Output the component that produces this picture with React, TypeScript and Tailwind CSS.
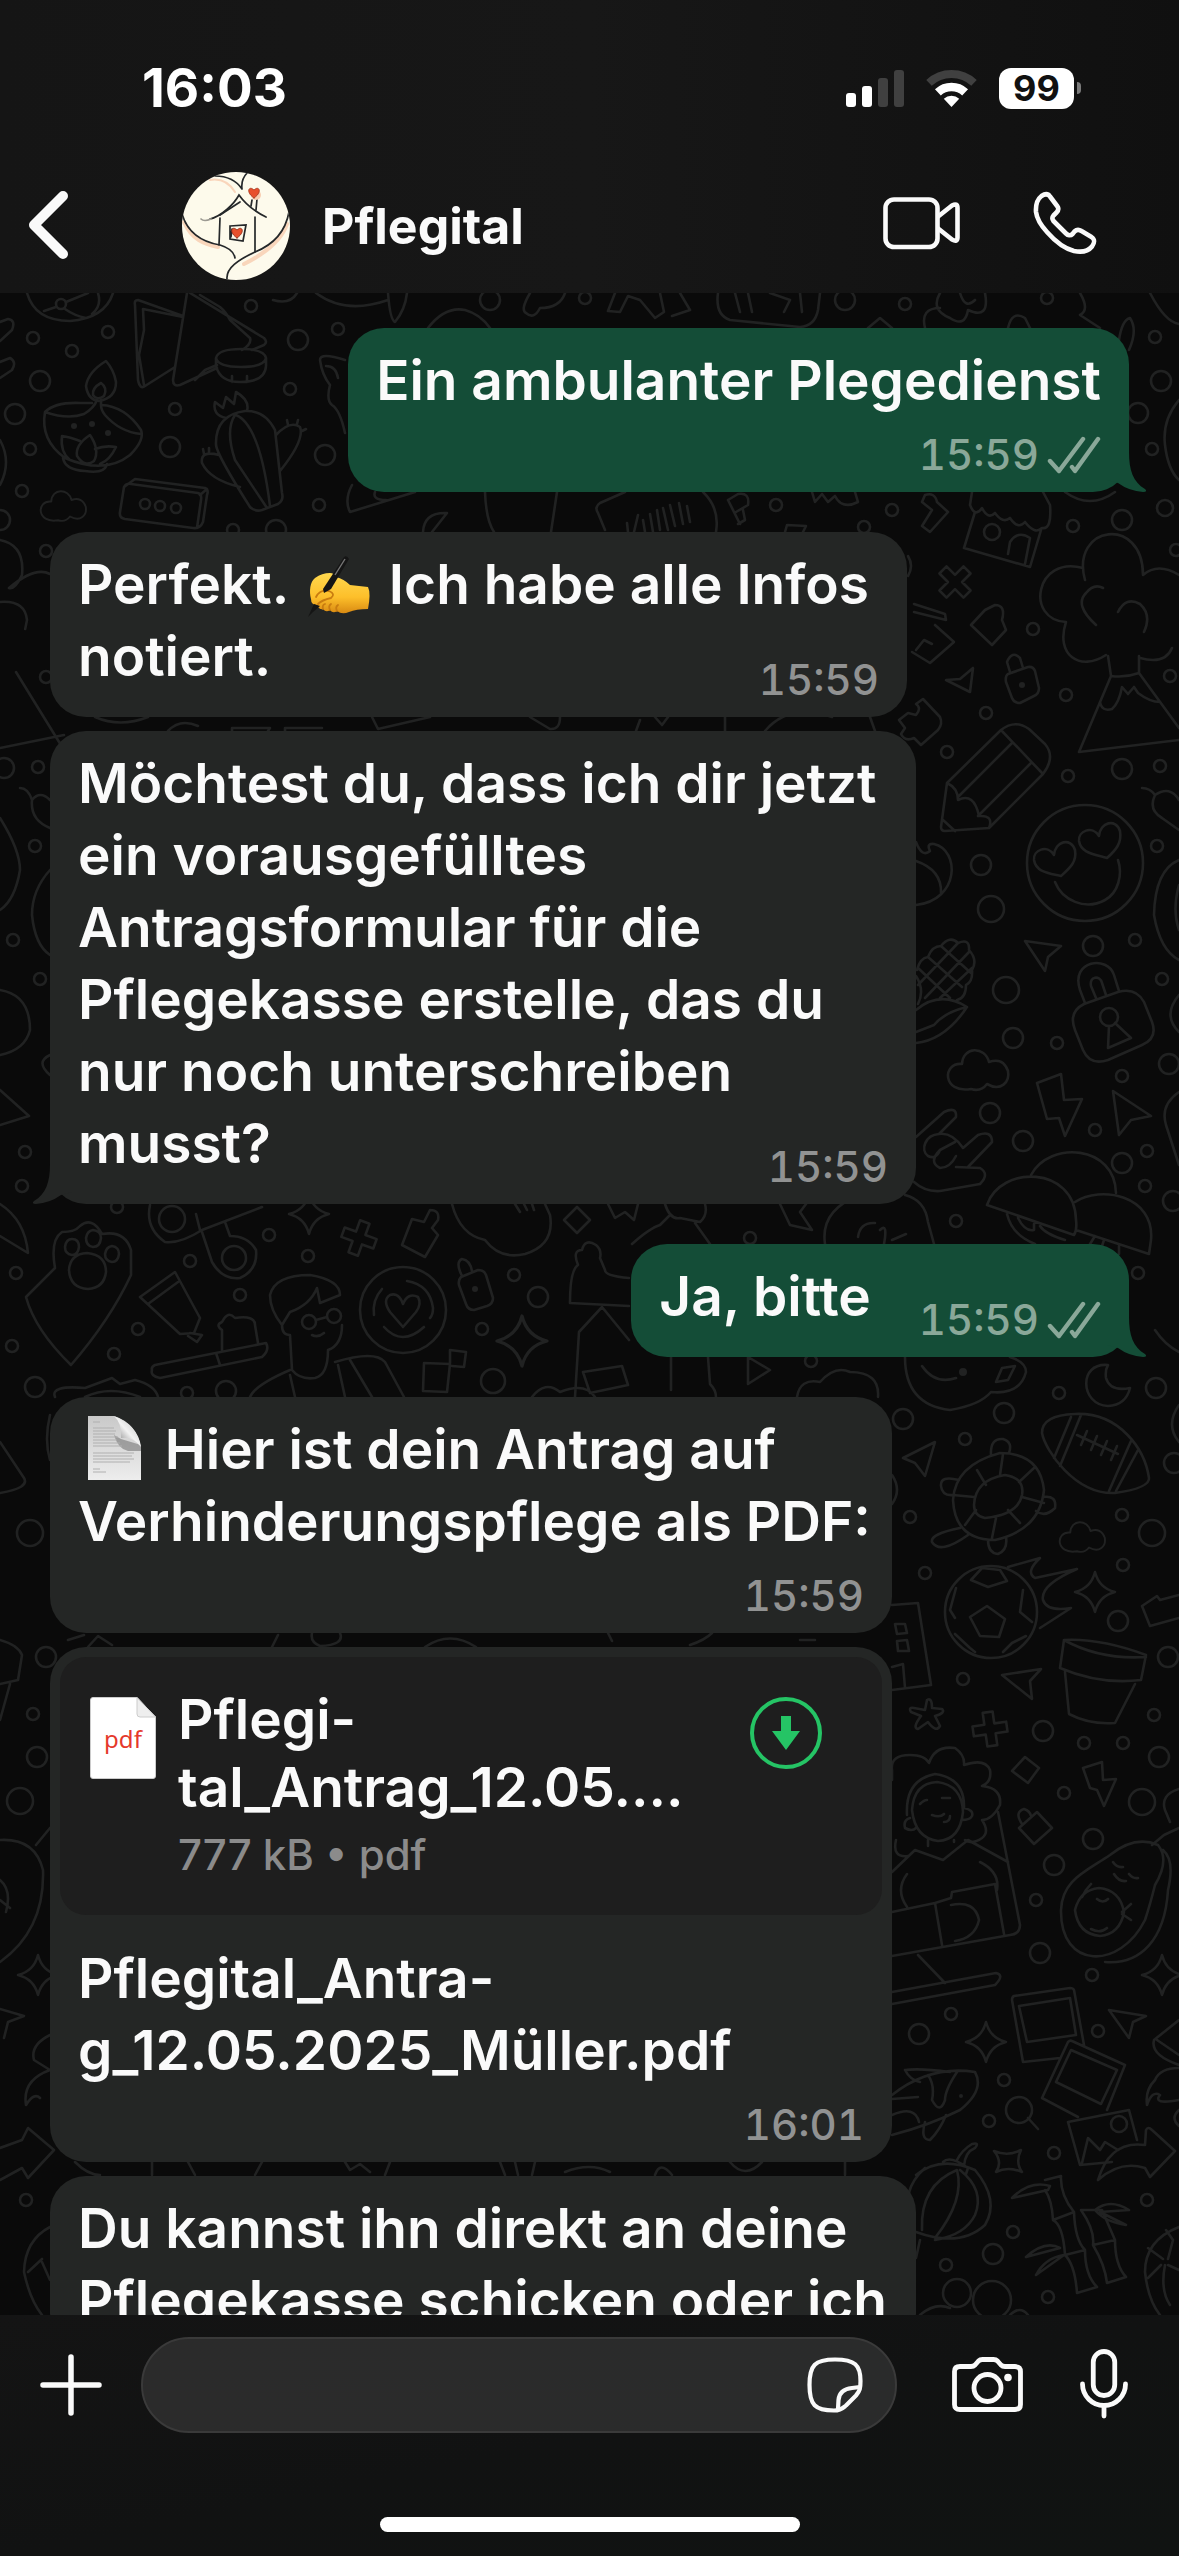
import type { ReactNode } from "react";

type Dot = [number, number, number];

const DOTS: Dot[] = [
  [251, 306, 6], [298, 340, 10], [338, 329, 6], [33, 338, 6], [108, 332, 6], [72, 351, 6], [40, 381, 10], [15, 414, 10],
  [290, 389, 6], [175, 409, 6], [170, 447, 10], [325, 455, 10], [30, 449, 6], [22, 491, 6], [0, 520, 10], [319, 505, 6],
  [233, 530, 6], [276, 530, 10], [145, 504, 5], [160, 506, 5], [176, 508, 5], [61, 304, 5],
  [490, 300, 10], [585, 298, 6], [845, 300, 10], [905, 304, 6], [1047, 298, 6], [1155, 337, 6], [1161, 381, 10], [1138, 413, 10],
  [1152, 449, 6], [776, 505, 6], [892, 510, 6], [1073, 526, 6], [1122, 520, 10], [1165, 508, 8], [864, 527, 6], [992, 532, 8],
  [1033, 629, 6], [1176, 550, 6],
  [1066, 695, 6], [986, 713, 6], [947, 752, 6], [1068, 776, 6], [1122, 769, 10], [1160, 766, 6], [981, 865, 10], [991, 909, 13],
  [1093, 946, 10], [1135, 940, 6], [1006, 990, 13], [1162, 979, 6], [1013, 1038, 10], [1057, 1043, 6], [1122, 1076, 6],
  [1169, 1064, 10], [990, 1113, 10], [1023, 1141, 10], [1095, 1130, 6], [1147, 1151, 6], [1122, 1163, 10], [1145, 1186, 6],
  [1173, 1201, 10], [1157, 846, 6], [1170, 676, 6], [956, 1221, 6], [1109, 1017, 9], [1138, 1273, 6],
  [269, 1235, 6], [190, 1261, 6], [16, 1273, 6], [308, 1256, 6], [240, 1295, 6], [514, 1275, 6], [538, 1297, 10], [138, 1329, 6],
  [482, 1329, 6], [12, 1346, 6], [114, 1354, 6], [493, 1381, 12], [35, 1387, 10], [187, 1393, 6], [226, 1391, 10], [750, 1238, 6],
  [811, 1361, 6], [117, 1207, 6], [403, 1310, 43], [172, 1219, 13], [234, 1258, 12], [309, 1322, 7], [334, 1316, 7],
  [903, 1419, 10], [1004, 1413, 10], [965, 1439, 6], [1059, 1393, 6], [1156, 1388, 10], [910, 1517, 6], [1122, 1515, 6],
  [1152, 1533, 13], [925, 1573, 6], [1123, 1565, 6], [1118, 1621, 10], [963, 1679, 6], [1168, 1657, 10], [1154, 1715, 6],
  [1043, 1731, 10], [1084, 1743, 6], [1123, 1743, 6], [1159, 1757, 10], [1064, 1793, 6], [1142, 1802, 13], [1093, 1839, 10],
  [1054, 1865, 10], [1036, 1900, 6], [1040, 1953, 10], [1092, 1975, 6], [919, 2034, 10], [951, 2014, 6], [1098, 2031, 6],
  [1004, 2080, 6], [989, 2121, 6], [1054, 2153, 6], [1147, 2200, 6], [1013, 2232, 6], [993, 2254, 10], [946, 2265, 6],
  [1048, 2297, 6], [1174, 1463, 10], [991, 1612, 46], [1019, 2110, 13], [1119, 2124, 8], [957, 2293, 14], [992, 2300, 19],
  [1085, 863, 58], [46, 551, 6], [46, 677, 6], [4, 768, 10], [38, 767, 6], [35, 846, 6], [13, 940, 6], [40, 979, 6], [25, 1152, 6],
  [22, 1186, 6], [46, 1657, 10], [33, 1714, 6], [37, 1757, 10], [20, 1801, 13], [26, 2200, 6], [30, 1533, 13],
];

const FILLED: Dot[] = [
  [74, 426, 3], [92, 424, 3], [108, 433, 3], [1022, 685, 3], [963, 1372, 4], [961, 2096, 2], [475, 1289, 3],
];

const CLOUD = "M15 18C-5 16 -5 48 24 43Q34 46 40 38C54 46 63 36 61 25Q56 11 42 16C38 0 16 0 15 18Z";
const STAR = "M0 -20Q4 -4 20 0Q4 4 0 20Q-4 4 -20 0Q-4 -4 0 -20Z";
const CROSS = "M-5 -17H5V-5H17V5H5V17H-5V5H-17V-5H-5Z";
const DIAMOND = "M0 -13L13 0L0 13L-13 0Z";

const DOODLES: string[] = [
  // top left: ball, curtains, bowl, oil lamp
  "M27 293Q35 321 70 321Q105 318 113 293M56 307L44 311M66 302L88 293M65 309Q75 316 86 318M98 293Q102 306 92 314",
  "M183 316L138 300Q134 300 135 305L138 380Q140 390 145 386L175 367M183 317L143 309L144 330L139 355L144 385M187 293L173 380Q173 387 180 385L217 368M195 380L205 370L217 365M190 293L264 338Q268 342 264 345L252 350M200 295L220 307Q226 312 230 320L250 338Q252 344 242 350",
  "M216 358Q218 349 241 349Q264 349 266 358Q264 367 241 367Q218 367 216 358V366Q220 382 240 382Q265 382 266 366V358M232 376V382M247 376V382",
  "M106 361Q88 372 86 386Q88 400 99 401Q116 398 116 382Q114 370 106 361ZM101 383Q92 388 93 395Q97 401 104 396Q108 388 101 383Z",
  "M45 412Q55 402 80 403L92 403M45 412Q68 420 84 414Q94 408 97 400M45 412Q40 440 65 458Q105 475 130 455Q145 440 141 430Q125 406 101 405V400M141 434Q120 432 105 415Q101 410 101 405M63 458Q65 470 85 471Q105 474 107 464M77 456Q75 445 90 435Q100 450 94 461Q85 468 77 456M80 441Q70 437 62 436Q60 452 70 460M95 449Q105 445 116 447Q110 460 100 464",
  "M250 507Q255 512 262 510L278 504Q284 500 282 493L275 430Q265 410 245 411Q215 415 216 445Q217 455 250 507ZM235 415Q225 430 235 460L267 508M236 415Q260 425 270 506M219 455Q200 450 202 463Q210 480 240 487M276 435Q290 420 300 427Q305 440 280 471M226 418Q212 415 215 402L223 408L226 397L234 404L236 392Q250 400 247 411M204 454L203 449M209 452V448M288 425L287 420M297 424L298 420M302 431L306 429",
  "M124 487L135 479L205 488Q209 490 207 495L203 522Q200 529 193 528L125 519Q119 518 120 512L124 487Q126 483 131 484L198 493Q202 494 201 500L197 528M200 495L207 489",
  "M0 322L8 319Q16 320 12 330L0 341M0 362L10 358Q17 362 12 370L0 378M0 440Q12 462 0 485M345 360Q320 352 320 360Q322 375 330 385Q326 400 332 405Q340 410 345 433M326 366Q336 366 338 378",
  "M428 328Q445 306 465 310Q480 314 490 328M273 300Q290 305 297 293M316 293Q345 315 388 300M388 293Q390 320 395 322Q405 310 407 293",
  "M530 293Q520 310 526 313Q534 320 540 308Q560 308 565 293M615 293L608 311L620 312L628 296L640 300L655 318L664 312L660 293M690 310L680 293M672 316L690 310M718 293Q715 315 730 320L800 327Q815 326 818 310L820 293M735 293L740 312M748 293L752 312M770 293L790 300L784 312M800 293L802 312M868 328L880 318L892 328M940 293Q930 310 950 318Q965 328 968 310Q990 320 985 293M960 293Q965 310 975 300M925 328Q920 308 940 308M1080 293Q1090 310 1080 315L1100 328M1008 328Q1012 310 1025 318L1030 328M1119 340Q1122 320 1130 318Q1138 330 1129 350M1150 293Q1165 322 1179 324M1179 400Q1162 420 1165 445Q1168 470 1179 480",
  // below the first message
  "M352 485Q344 500 350 512L415 492M375 492Q372 500 386 500M485 492Q486 520 494 532M423 532Q424 512 447 513L432 532M557 492L551 532M605 530L598 513Q594 507 600 503L625 492M628 532L627 523M634 532L638 515M645 532L643 520M653 532L650 514M660 530L657 510M668 530L663 508M675 526L670 505M683 524L679 503M690 522L687 506M703 492Q720 508 716 532M728 500L738 494Q750 492 748 505L736 512M728 500L740 524M738 524L745 520L743 510M812 492L815 502L822 494L828 502L835 496Q842 510 858 502L855 492M785 532L787 525L806 526L803 532",
  "M970 505Q975 518 982 508Q988 520 995 513Q1003 524 1010 518Q1018 530 1025 522Q1035 535 1042 528Q1052 530 1050 505L1043 492M972 492L970 505M975 512L964 548L1030 567L1041 530M1008 554L1010 542Q1018 530 1030 538L1025 564M925 495Q935 492 937 502L948 512L930 532L922 526L932 510L922 502ZM1065 492Q1090 510 1115 492",
  "M1085 580C1070 525 1143 515 1143 575Q1158 562 1179 575M1083 568C1035 555 1025 620 1066 622C1055 655 1080 672 1106 655M1096 625Q1074 605 1086 593Q1094 583 1103 588M1118 612Q1126 596 1140 604Q1152 615 1144 632M1140 658Q1165 665 1172 648",
  "M914 604L945 614L946 620L914 612M935 625L954 642L930 663L912 652M916 650L924 640L932 644M971 625L985 610L995 605Q1006 605 1002 620L1006 630L992 645ZM908 556Q914 566 908 576M946 680L960 679L973 668L970 692Z",
  // right column, upper half
  "M1008 674L1028 667Q1033 666 1035 671L1039 688Q1039 694 1034 696L1020 703Q1014 703 1012 698L1006 682Q1005 676 1008 674ZM1010 672L1007 662Q1012 650 1020 658L1023 668",
  "M1108 656L1111 676Q1125 678 1139 673V656M1111 676L1079 752L1179 740M1139 673L1179 728M1100 702Q1102 712 1112 709Q1119 703 1122 687L1128 694L1134 687L1138 693Q1150 702 1160 702",
  "M899 720L908 713L916 715Q922 708 916 704L923 699L940 717Q943 724 938 730L921 745L914 738Q905 742 901 734L905 728Z",
  "M947 783L1001 730Q1015 719 1029 729L1045 744Q1056 757 1043 774L989 828L945 831Q941 831 941 827ZM1001 730L1043 774M1012 743L958 797M1031 763L978 816M947 783Q958 788 958 800Q974 792 979 816Q994 815 989 828M943 820L955 831",
  "M1099 836C1092 825 1078 831 1079 841C1081 853 1093 854 1107 858C1116 850 1122 843 1120 831C1116 818 1100 822 1099 836ZM1054 855C1047 844 1033 850 1034 860C1036 872 1048 873 1061 876C1070 868 1077 862 1075 850C1071 837 1055 841 1054 855ZM1055 882C1062 900 1085 911 1105 900C1118 893 1123 875 1118 860",
  "M1142 788Q1150 788 1155 795Q1170 785 1179 800M1155 795Q1148 810 1162 818L1179 830M1179 860Q1155 870 1154 915Q1160 950 1179 960M1179 885Q1172 910 1179 930M1179 995Q1162 1015 1179 1032M1179 1092Q1160 1105 1166 1125L1179 1165",
  "M916 842Q922 858 930 851Q926 843 934 844C960 850 960 900 916 905M916 861Q942 870 941 893",
  "M917 970Q920 958 928 957Q932 946 941 946Q950 935 958 943Q970 938 969 950Q978 960 972 970Q973 982 966 985Q966 998 957 1000M928 957L962 987M941 946L971 973M918 968L950 998M918 985L958 943M925 998L969 952M916 976Q925 990 918 1004M940 998L972 968M916 1010Q940 990 967 1007Q945 1040 916 1043M916 1032L934 1025Q945 1012 967 1007",
  "M1025 941L1061 946L1048 957L1045 971ZM1113 1091L1151 1116L1131 1120L1119 1135ZM1037 1083L1061 1074L1064 1100L1082 1099L1065 1136L1059 1118L1047 1119Z",
  "M1084 1004L1118 992Q1136 987 1144 1002L1152 1022Q1158 1038 1142 1045L1108 1060Q1090 1066 1083 1050L1075 1030Q1068 1012 1084 1004ZM1085 1003L1080 990C1070 960 1108 955 1114 975L1119 991M1096 998L1091 986C1089 976 1100 975 1102 983L1106 995M1109 1026L1108 1048L1131 1038L1115 1023",
  "M916 1137L944 1112Q957 1106 956 1117L939 1134C925 1135 920 1150 928 1156Q936 1160 940 1150L955 1142M940 1150Q928 1162 940 1168Q950 1168 956 1156M939 1134Q952 1132 963 1148L978 1135Q992 1130 992 1142L968 1167M956 1167L980 1168Q990 1174 980 1184L940 1191Q925 1192 914 1182",
  "M987 1205C1000 1165 1075 1165 1076 1220C1077 1228 1076 1232 1074 1235ZM1031 1175C1050 1140 1115 1145 1116 1193M1075 1202C1100 1185 1155 1195 1151 1240L1149 1254L1076 1230M1007 1214Q1012 1235 1035 1244M1018 1218Q1025 1232 1034 1230V1224M1040 1226Q1045 1234 1065 1240M1095 1236L1090 1244M1104 1240L1102 1246M1119 1246V1254M905 1195Q925 1200 928 1222L934 1244M880 1230Q888 1222 884 1244M892 1240L906 1234",
  // middle band
  "M71 1365Q35 1330 26 1297L55 1268Q50 1240 62 1232Q75 1232 80 1226Q92 1216 102 1234Q125 1230 131 1250V1275Q110 1320 71 1365ZM87 1253Q106 1255 106 1272Q104 1288 88 1289Q70 1288 69 1270Q70 1254 87 1253ZM72 1239Q79 1239 79 1247Q78 1255 72 1255Q65 1254 65 1247Q66 1239 72 1239M93 1230Q101 1231 101 1238Q100 1247 93 1247Q86 1246 86 1238Q87 1231 93 1230M112 1246Q119 1247 119 1254Q118 1262 112 1262Q105 1261 105 1254Q106 1247 112 1246",
  "M150 1205Q145 1228 165 1242Q180 1244 202 1230L262 1207M202 1232L212 1262Q222 1280 240 1278Q258 1270 256 1250Q248 1236 230 1236L225 1222M196 1214L200 1230M0 1204Q25 1220 28 1253L0 1236",
  "M402 1245L412 1219L424 1222L430 1210Q440 1210 438 1220L432 1228L438 1235L425 1257ZM452 1204Q460 1235 485 1240Q500 1260 525 1254Q555 1245 550 1215L545 1204M515 1204L520 1212M524 1204L527 1210M532 1204L534 1210",
  "M382 1289Q372 1300 374 1315M407 1281Q430 1285 433 1308Q433 1315 430 1318M384 1327Q402 1347 424 1327M403 1327L390 1312Q382 1300 390 1295Q399 1292 403 1304Q408 1292 418 1297Q422 1304 416 1312Z",
  "M282 1325Q270 1310 270 1295Q275 1275 310 1275Q340 1280 340 1295L320 1303L317 1288Q310 1305 290 1312L282 1325Q282 1335 290 1335L292 1370Q300 1380 315 1378Q328 1375 328 1350Q342 1345 342 1325M335 1362Q375 1350 385 1362L404 1397M250 1397Q255 1385 290 1370M290 1375L295 1397M338 1365L345 1397M350 1360L372 1397M316 1320L327 1317M312 1335Q318 1338 324 1333",
  "M152 1370Q150 1376 160 1378L262 1357Q270 1350 266 1343L155 1365Q151 1367 152 1370ZM222 1350V1330Q215 1325 222 1322Q228 1310 235 1318Q255 1315 255 1325L258 1343M216 1353L220 1365M140 1297L175 1272L200 1318L194 1333L180 1334ZM148 1304L178 1282M190 1333L202 1335L197 1342L188 1336",
  "M461 1277L478 1270Q484 1270 486 1275L493 1298Q493 1304 487 1306L474 1310Q468 1310 466 1304L459 1285Q458 1280 461 1277ZM462 1276Q455 1262 462 1259Q470 1260 472 1271",
  "M424 1363L450 1364L447 1392L423 1391ZM450 1363V1350L466 1352L464 1367L452 1366M570 1303Q570 1270 578 1265Q572 1250 582 1250Q585 1238 596 1245Q602 1250 600 1258L605 1270Q605 1276 629 1278M570 1303L629 1306M602 1307L579 1332L575 1397M602 1307L629 1340M583 1372L622 1366L628 1385L590 1393ZM671 1357V1390M708 1357L710 1384Q716 1390 716 1397M748 1357L770 1370L748 1384ZM797 1397Q800 1378 820 1382Q835 1365 850 1372Q880 1372 878 1397M532 1397Q545 1380 560 1392Q585 1382 595 1397",
  "M665 1204Q670 1220 680 1218L700 1222Q708 1215 705 1204M632 1244Q650 1228 660 1225L670 1215M695 1223L710 1244M608 1204L615 1218L625 1212L634 1220L638 1204M780 1204L790 1225L812 1230L800 1212L806 1204M825 1244Q820 1210 860 1195M858 1237Q860 1222 875 1223M55 1397Q50 1385 85 1388L112 1378L120 1384L135 1380Q155 1385 158 1397M85 1397Q110 1385 140 1397",
  // right column, lower half
  "M905 1357Q905 1405 950 1410Q980 1405 991 1392Q1020 1395 1026 1372Q1026 1362 1010 1357M922 1366Q935 1385 956 1378M996 1382L1002 1368L1015 1366L1008 1380Z",
  "M1108 1365C1078 1362 1080 1405 1108 1406Q1126 1405 1130 1388Q1110 1392 1106 1378Q1105 1370 1108 1365ZM1155 1330Q1165 1345 1179 1352M1179 1405Q1165 1425 1179 1442",
  "M1042 1433Q1042 1415 1075 1414C1120 1412 1145 1450 1149 1478Q1150 1488 1115 1493C1075 1495 1045 1450 1042 1433ZM1071 1417L1054 1458M1081 1415L1060 1466M1131 1441L1109 1491M1138 1450L1116 1491M1077 1435L1118 1454M1087 1431L1081 1445M1097 1436L1091 1450M1107 1441L1101 1455M1117 1446L1111 1460",
  "M953 1500Q955 1465 1000 1453Q1040 1453 1044 1490Q1040 1530 995 1540Q955 1540 953 1500ZM974 1505Q975 1480 1005 1475Q1025 1478 1022 1495Q1018 1515 985 1518Q974 1516 974 1505M986 1485L977 1470M1000 1475L1003 1454M1019 1482L1034 1468M1022 1497L1044 1503M1008 1510L1020 1523M996 1518L992 1538M976 1510L965 1525M974 1497L953 1495M991 1455Q990 1438 1003 1439Q1013 1442 1009 1453M959 1480Q940 1475 941 1486Q942 1496 953 1495M1043 1497Q1057 1495 1055 1508Q1045 1518 1036 1511M960 1528Q930 1534 932 1542Q940 1555 968 1535M988 1540Q988 1553 998 1554Q1008 1550 1006 1537",
  "M970 1617L987 1606L1005 1619L999 1637L980 1636ZM971 1580L988 1587L1007 1581L1000 1570L982 1568ZM956 1588L950 1610L955 1618M1023 1590L1020 1612L1032 1622M955 1634L970 1648L975 1652M1003 1652L1012 1643L1026 1636M1008 1567L1040 1558Q1025 1572 1035 1578L1077 1569Q1040 1585 1043 1600Q1047 1612 1071 1608L1040 1628",
  "M1064 1640Q1100 1638 1146 1655L1141 1680Q1100 1685 1060 1668ZM1064 1640Q1100 1660 1146 1657M1065 1672L1069 1714Q1090 1725 1115 1723L1135 1684M1179 1595L1160 1600L1157 1596L1142 1606L1150 1626L1179 1618",
  "M892 1605L918 1603L931 1685L892 1690M895 1624L905 1624L907 1633L897 1634ZM897 1641L907 1640L909 1651L898 1651ZM892 1667L903 1664L905 1688M1002 1675L1041 1669L1030 1681L1032 1699ZM903 1458L935 1442L925 1476L915 1463ZM1109 2010L1146 2016L1133 2022L1129 2038ZM892 1475Q902 1490 892 1504",
  "M892 1780V1770Q890 1755 910 1755Q925 1755 929 1763Q935 1745 955 1748Q965 1755 964 1765Q985 1758 990 1770Q992 1782 982 1786Q1002 1788 1000 1805Q992 1820 982 1820Q990 1832 982 1838Q972 1845 965 1840M912 1810Q914 1783 937 1782Q962 1785 963 1812Q960 1840 938 1841Q915 1838 912 1810M907 1815Q905 1780 935 1774Q965 1778 964 1808Q974 1810 972 1816Q970 1820 962 1820M910 1818Q903 1820 905 1828Q912 1832 916 1828M928 1840V1846M954 1840V1842M892 1872L915 1850L943 1860L968 1840L1008 1862M998 1812L1020 1925Q1020 1934 1010 1935L892 1956M892 1912L935 1903L942 1945M935 1903L951 1898L952 1892L995 1884L1004 1934M951 1905Q975 1900 979 1920Q975 1938 955 1941M918 1955L945 1983M892 1992L996 1973Q1005 1975 995 1985L892 2004M932 1815Q940 1818 944 1814M920 1804Q924 1800 927 1800M942 1798H950M944 1822Q950 1822 950 1816M907 1874Q895 1890 907 1907M980 1862Q1000 1872 997 1890M896 1840Q892 1858 908 1856",
  "M1061 1910C1062 1880 1085 1872 1110 1855Q1135 1835 1158 1845Q1170 1860 1155 1885Q1150 1905 1145 1920C1120 1970 1060 1970 1061 1910ZM1163 1850Q1175 1860 1168 1890C1165 1940 1140 1965 1105 1962M1075 1910Q1080 1890 1099 1888Q1120 1890 1124 1912Q1120 1934 1100 1936Q1078 1934 1075 1910M1082 1897L1086 1890L1091 1884M1122 1912L1131 1904M1122 1914L1131 1920M1091 1929Q1100 1934 1107 1928M1097 1899Q1103 1904 1108 1899M1113 1862Q1117 1868 1123 1867M1114 1874Q1119 1882 1126 1881M1129 1874Q1133 1879 1138 1878M1152 1845L1164 1835L1179 1828M1179 1789Q1160 1795 1165 1810L1170 1822",
  "M1083 1768L1102 1762L1103 1780L1116 1779L1104 1806L1097 1790L1090 1788ZM1019 1828L1037 1812L1052 1828L1034 1844ZM1022 1824Q1014 1812 1024 1809Q1030 1811 1031 1816M1012 1771L1025 1757L1039 1768L1028 1783Z",
  "M1084 2045L1074 1990Q1073 1988 1070 1988L1014 1996Q1012 1997 1012 2000L1023 2062L1060 2058M1019 2006L1070 1998L1076 2035L1027 2042ZM1107 2110L1125 2065L1072 2041Q1070 2040 1068 2042L1042 2098L1078 2117M1071 2050L1117 2070L1101 2104L1056 2082ZM1137 2140L1129 2110L1068 2122L1080 2165L1112 2162M1082 2163L1088 2138L1100 2150L1105 2142L1118 2150",
  "M1098 2180Q1110 2140 1145 2145L1146 2130Q1148 2126 1152 2130L1175 2151L1150 2177L1145 2168Q1120 2160 1098 2180M1179 2020L1154 2040Q1150 2055 1179 2065M1157 2040L1179 2055M1179 2068Q1160 2068 1155 2080Q1145 2090 1147 2105Q1152 2090 1160 2095Q1152 2105 1179 2100M1179 2110Q1170 2118 1179 2126",
  "M892 2095Q930 2065 975 2072Q985 2090 960 2110Q930 2125 892 2135M905 2070Q920 2068 950 2072M905 2070Q910 2080 920 2082M928 2075Q935 2085 932 2100Q940 2115 945 2100Q945 2090 957 2072M925 2122Q920 2140 930 2140Q940 2130 946 2115M892 2115Q915 2105 919 2122M892 2099L918 2097M1028 2118L1038 2129",
  "M916 2175Q940 2155 975 2170Q1000 2200 985 2225Q960 2248 916 2232M910 2225Q900 2190 925 2168M960 2170Q985 2190 975 2215Q965 2235 935 2240M922 2230Q920 2185 957 2170Q965 2200 935 2238M943 2162Q950 2155 968 2168L966 2174M957 2160Q962 2150 972 2144Q980 2142 975 2148Q965 2152 964 2166M920 2240L916 2258",
  "M1012 2198Q1030 2180 1050 2186L1048 2190ZM1045 2180L1061 2176Q1060 2195 1074 2212Q1075 2240 1085 2250Q1085 2275 1097 2287L1077 2293Q1075 2265 1065 2255Q1063 2225 1053 2220Q1052 2200 1045 2190M1053 2220L1074 2212M1065 2255L1085 2250M1081 2210Q1095 2230 1093 2245Q1105 2265 1107 2283L1126 2277Q1115 2265 1115 2240L1102 2210ZM1093 2245L1115 2240M1026 2257Q1045 2240 1060 2248L1026 2257M1036 2275Q1045 2258 1064 2255ZM1095 2210Q1110 2198 1129 2210L1100 2212L1126 2225Q1105 2222 1095 2210",
  "M1179 2227Q1145 2240 1145 2272Q1148 2300 1160 2315M1163 2259L1148 2248M1168 2259L1173 2240L1166 2230M1168 2265L1179 2270M1161 2265L1148 2278M1165 2265Q1160 2290 1170 2305M920 2315Q935 2302 950 2308M1010 2315Q1020 2305 1028 2315",
  "M994 2151Q1008 2157 1021 2150Q1015 2162 1022 2172Q1008 2166 996 2172Q1003 2162 994 2151ZM914 1708L925 1710L927 1700Q932 1697 932 1708L942 1709Q946 1713 935 1716L940 1726Q936 1733 928 1722L918 1729Q912 1728 921 1716L911 1712Q908 1707 914 1708Z",
  // left margin
  "M0 540Q25 545 22 575Q15 590 9 588Q35 566 50 574M0 602Q25 600 27 620Q24 635 26 625M16 672L64 750M0 748L64 735M20 788Q28 788 32 800Q40 790 50 800M32 800Q30 820 50 828M0 818Q20 850 20 870Q15 900 0 910M50 870Q32 890 32 915Q35 945 50 955M0 990Q30 995 30 1030Q25 1050 0 1055M0 1090L29 1116L0 1125M50 1055Q35 1062 50 1075M0 1442L24 1478Q30 1488 0 1493M50 1415Q44 1440 50 1460",
  "M0 1640Q18 1645 22 1655L18 1680L0 1684M10 1684L0 1720M0 1840Q35 1838 43 1870Q45 1930 0 1962M50 1828L36 1845M0 1880Q12 1890 6 1912M0 1900L10 1908M0 2009L24 2016L8 2022L4 2038M50 2035Q30 2045 34 2060L50 2070M26 2105Q22 2080 50 2070M26 2105Q34 2092 40 2098M0 2148L22 2140L28 2128L54 2150L28 2178L22 2168L0 2180M50 2227Q25 2240 24 2272Q30 2300 42 2315M42 2259L28 2272M42 2262L50 2280",
  // slivers between neighbouring messages
  "M95 717Q120 728 148 717M168 731Q180 718 198 726M232 731V728H270L268 731M285 731V728H322M372 717L378 729Q400 724 430 717M530 717L550 729Q560 730 560 717M636 731L640 720M655 717L662 725L668 717M725 717V731M765 731Q790 702 832 717M870 717L875 731",
  "M68 1640L84 1635M88 1647L98 1636L112 1645M272 1647L278 1635M312 1633Q310 1642 320 1646Q345 1645 340 1633M425 1647Q450 1630 476 1647M608 1633L612 1641M690 1645Q705 1640 712 1633M800 1640H815",
  "M75 2162Q88 2175 100 2175M152 2162V2175M188 2162L195 2175M262 2162L255 2175M345 2162L350 2170L360 2164L370 2172M390 2162L385 2175M500 2162L505 2175M515 2162L518 2175M535 2162L532 2175M565 2172Q590 2162 610 2172M655 2175Q660 2160 672 2175M730 2162Q745 2180 762 2162M845 2162V2175",
];

function Wallpaper() {
  return (
    <svg
      aria-hidden="true"
      className="absolute inset-0 h-full w-full"
      viewBox="0 293 1179 2022"
      preserveAspectRatio="xMidYMin slice"
      fill="none"
      stroke="#212222"
      strokeWidth="2.6"
      strokeLinecap="round"
      strokeLinejoin="round"
    >
      {DOODLES.map((d) => (
        <path key={d} d={d} />
      ))}
      {DOTS.map(([x, y, r]) => (
        <circle key={`${x}-${y}`} cx={x} cy={y} r={r} />
      ))}
      {FILLED.map(([x, y, r]) => (
        <circle key={`${x}-${y}`} cx={x} cy={y} r={r} fill="#212222" stroke="none" />
      ))}
      <path d={CLOUD} transform="translate(947 1046)" />
      <path d={CLOUD} transform="translate(40 488) scale(.75)" />
      <path d={CLOUD} transform="translate(1059 1519) scale(.75)" />
      <path d={STAR} transform="translate(309 1214)" />
      <path d={STAR} transform="translate(522 1341) scale(1.25)" />
      <path d={STAR} transform="translate(1095 1592)" />
      <path d={STAR} transform="translate(986 2042)" />
      <path d={STAR} transform="translate(1162 1975)" />
      <path d={STAR} transform="translate(38 1975)" />
      <path d={CROSS} transform="translate(359 1238) rotate(20)" />
      <path d={CROSS} transform="translate(990 1729) rotate(-8)" />
      <path d={CROSS} transform="translate(955 582) rotate(45)" />
      <path d={DIAMOND} transform="translate(577 1220)" />
    </svg>
  );
}

function Avatar() {
  const heart = "M0 5C-9 -1 -5 -8 0 -3C5 -8 9 -1 0 5Z";
  return (
    <svg viewBox="0 0 108 108" className="h-27 w-27 rounded-full" fill="none" strokeLinecap="round" role="img" aria-label="Pflegital">
      <rect width="108" height="108" fill="#fdfaec" />
      <g stroke="#f8cdb0" strokeWidth="4" opacity=".8">
        <path d="M2 50C10 68 22 72 36 75" />
        <path d="M105 52C98 72 78 84 62 92" />
        <path d="M28 8C40 6 48 12 53 20" strokeWidth="2" />
      </g>
      <g stroke="#25282a" strokeWidth="1.7">
        <path d="M0 42C6 62 20 70 38 73C48 76 52 80 53 86" />
        <path d="M107 40C103 62 88 74 73 80C56 88 44 96 45 107" />
        <path d="M33 4C46 4 54 8 60 17M66 0C61 5 59 10 60 17" />
        <path d="M28 47C40 44 52 32 57 23C64 33 72 39 84 45" />
        <path d="M38 43L58 30M38 46L37 73M73 45V80M70 28L69 34M75 27L74 38" />
        <path d="M48 54L64 53L61 69L48 67ZM50 57L49 65" />
      </g>
      <path d="M19 47Q22 50 29 47" stroke="#9c9a92" strokeWidth="1.7" />
      <circle cx="74" cy="23" r="5" fill="#f8cdb0" />
      <path d={heart} transform="translate(55 61)" fill="#e8502c" stroke="#8c2a18" strokeWidth=".8" />
      <path d={heart} transform="translate(72 21)" fill="#e8502c" stroke="#a33a22" strokeWidth=".8" />
    </svg>
  );
}

function StatusIcons() {
  return (
    <div className="flex items-center">
      <svg viewBox="0 0 58 37" className="h-[37px] w-[58px]" fill="#fff" aria-label="Mobilfunk">
        <rect x="0" y="23" width="10" height="14" rx="3" />
        <rect x="16" y="16" width="10" height="21" rx="3" />
        <rect x="32" y="8" width="10" height="29" rx="3" fill="#404040" />
        <rect x="48" y="0" width="10" height="37" rx="3" fill="#404040" />
      </svg>
      <svg viewBox="0 0 51 37" className="ml-[22px] h-[37px] w-[51px]" fill="none" aria-label="WLAN">
        <path d="M3 12.9A33 33 0 0 1 48 12.9" stroke="#404040" strokeWidth="8" />
        <path d="M11.9 22.4A20 20 0 0 1 39.1 22.4" stroke="#fff" strokeWidth="8.6" />
        <path d="M25.5 37L17.8 28.7A11.3 11.3 0 0 1 33.2 28.7Z" fill="#fff" />
      </svg>
      <div className="ml-[22px] flex h-[41px] w-[75px] items-center justify-center rounded-xl bg-white text-4xl font-bold text-[#111111]">
        99
      </div>
      <span className="ml-[3px] h-3 w-1 rounded-r-full bg-[#7a7a7a]" />
    </div>
  );
}

function Checks() {
  return (
    <svg viewBox="0 0 54 38" className="h-[38px] w-[54px]" fill="none" stroke="#8aa899" strokeWidth="4.4" strokeLinecap="round" strokeLinejoin="round" aria-label="Zugestellt">
      <path d="M3 25L12 35L36 3" />
      <path d="M25 31L28 35L51 3" />
    </svg>
  );
}

function Time({ value, sent }: { value: string; sent?: boolean }) {
  return (
    <div
      className={`flex h-[51px] items-center justify-end gap-2 text-[42px] leading-[51px] font-medium tabular-nums ${sent ? "text-[#8aa899]" : "text-[#919292]"}`}
    >
      <time>{value}</time>
      {sent && <Checks />}
    </div>
  );
}

function Tail({ sent }: { sent?: boolean }) {
  return sent ? (
    <svg aria-hidden="true" viewBox="0 0 40 40" className="absolute -right-[18px] bottom-0 h-10 w-10" fill="#144d37">
      <path d="M0 0H22C22 18 26 30 38 37Q41 40 36 40Q22 39 11 31L0 28Z" />
    </svg>
  ) : (
    <svg aria-hidden="true" viewBox="0 0 40 40" className="absolute -left-[18px] bottom-0 h-10 w-10" fill="#242625">
      <path d="M40 0H18C18 18 14 30 2 37Q-1 40 4 40Q18 39 29 31L40 28Z" />
    </svg>
  );
}

function Bubble({ children, sent, tail, className = "" }: { children: ReactNode; sent?: boolean; tail?: boolean; className?: string }) {
  return (
    <article
      className={`relative rounded-[36px] whitespace-nowrap ${sent ? "self-end bg-[#144d37]" : "self-start bg-[#242625]"} ${className}`}
    >
      {tail && <Tail sent={sent} />}
      {children}
    </article>
  );
}

function Lines({ lines }: { lines: ReactNode[] }) {
  return (
    <p className="text-[55px] leading-[72px] font-semibold text-[#fafafa]">
      {lines.map((line, i) => (
        <span key={i} className="block">
          {line}
        </span>
      ))}
    </p>
  );
}

function WritingHand() {
  return (
    <svg viewBox="-4 0 73 62" className="inline-block h-[62px] w-[73px] align-[-13px]" role="img" aria-label="✍️">
      <defs>
        <linearGradient id="skin" x1="0" y1="0" x2="0" y2="1">
          <stop offset="0" stopColor="#ffd84f" />
          <stop offset=".6" stopColor="#fdbf2a" />
          <stop offset="1" stopColor="#d98a12" />
        </linearGradient>
      </defs>
      <path d="M5 44C3 36 4 27 9 23Q16 18 24 18Q28 18 30 22Q38 24 44 30L62 32Q65 38 62 54Q50 54 43 57Q36 60 31 56Q27 59 24 55Q20 58 17 54Q13 55 11 50Q5 50 5 44Z" fill="url(#skin)" />
      <path d="M10 42Q14 34 23 36Q30 39 25 43Q16 45 12 49M17 54Q16 50 19 49M24 55Q22 51 25 49M31 56Q29 52 32 50" fill="none" stroke="#c97c10" strokeWidth="1.8" strokeLinecap="round" />
      <path d="M38 2Q41 0 43 4L25 34L18 38L17 34Z" fill="#151515" />
      <path d="M39 4L29 20" stroke="#777" strokeWidth="1.4" />
      <path d="M8 49L14 51L7 57L2 62Z" fill="#151515" />
    </svg>
  );
}

function PageIcon() {
  return (
    <svg viewBox="0 0 73 66" className="inline-block h-[66px] w-[73px] align-[-12px]" role="img" aria-label="📄">
      <defs>
        <linearGradient id="sheet" x1="0" y1="0" x2="0" y2="1">
          <stop offset="0" stopColor="#c9c9c9" />
          <stop offset="1" stopColor="#ededed" />
        </linearGradient>
        <linearGradient id="curl" x1="0" y1="1" x2="1" y2="0">
          <stop offset="0" stopColor="#5c5c5c" />
          <stop offset=".5" stopColor="#f2f2f2" />
          <stop offset="1" stopColor="#b5b5b5" />
        </linearGradient>
      </defs>
      <path d="M10 1H36Q58 8 63 32V65H10Z" fill="url(#sheet)" />
      <path d="M36 20L43 24L63 30V36L50 36Q40 34 36 20Z" fill="#777" opacity=".6" />
      <path d="M36 1Q44 8 43 23Q55 21 63 32Q60 10 36 1Z" fill="url(#curl)" />
      <path d="M15 7H22M15 13H36M15 16H38M15 19H37M15 22H40M15 25H39M15 28H42M15 31H44M15 38H56M15 41H54M15 44H56M15 47H52M15 54H22M15 57H28" stroke="#b0b0b0" strokeWidth="1.1" />
    </svg>
  );
}

function PdfIcon() {
  return (
    <div className="relative h-[82px] w-[66px] shrink-0">
      <svg aria-hidden="true" viewBox="0 0 66 82" className="h-full w-full">
        <path d="M3 .5H47L65.500 20V79Q65.500 81.500 63 81.500H3Q.5 81.500 .5 79V3Q.5 .5 3 .5Z" fill="#fff" stroke="#ccc" />
        <path d="M47 .5L65.500 20H50Q47 20 47 17Z" fill="#eee" stroke="#ccc" />
      </svg>
      <span className="absolute inset-x-0 top-6 text-center font-['Noto_Sans','Open_Sans',sans-serif] text-2xl leading-9 text-[#e5382b]">pdf</span>
    </div>
  );
}

function Attachment() {
  return (
    <section className="m-[10px] mb-0 flex h-[258px] rounded-[26px] bg-[#1e1e1e] pt-10 pl-[30px]">
      <PdfIcon />
      <div className="-mt-3 ml-[22px] flex flex-col">
        <p className="text-[55px] leading-[68px] font-semibold text-[#fafafa]">
          <span className="block">Pflegi-</span>
          <span className="block">tal_Antrag_12.05....</span>
        </p>
        <p className="mt-1 text-[42px] leading-[60px] font-medium text-[#8b8b8b]">777 kB • pdf</p>
      </div>
      <button type="button" aria-label="Herunterladen" className="mr-[60px] ml-auto h-[72px] w-[72px] shrink-0">
        <svg viewBox="0 0 72 72" className="h-full w-full" fill="none">
          <circle cx="36" cy="36" r="34" stroke="#25c465" strokeWidth="4" />
          <path d="M31 19H41V34H50L36 53L22 34H31Z" fill="#25c465" />
        </svg>
      </button>
    </section>
  );
}

export default function App() {
  return (
    <div className="flex h-screen flex-col overflow-hidden bg-[#0a0a0a] font-['Inter','Liberation_Sans',sans-serif] text-white">
      <header className="shrink-0 bg-linear-to-r from-[#151515] via-[#171717] to-[#101010]">
        <div className="flex h-[172px] items-center justify-between pt-1 pr-[98px] pl-[142px]">
          <time className="text-[53px] leading-none font-bold">16:03</time>
          <StatusIcons />
        </div>
        <div className="flex h-[121px] items-start pr-[82px] pl-7">
          <button type="button" aria-label="Zurück" className="mt-[18px] h-[70px] w-[42px] shrink-0">
            <svg viewBox="0 0 42 70" className="h-full w-full" fill="none" stroke="#fafafa" strokeWidth="10" strokeLinecap="round" strokeLinejoin="round">
              <path d="M35 6L6 35L35 64" />
            </svg>
          </button>
          <button type="button" className="ml-28 flex items-center gap-8">
            <Avatar />
            <h1 className="text-[50px] leading-none font-bold text-[#fafafa]">Pflegital</h1>
          </button>
          <button type="button" aria-label="Videoanruf" className="mt-6 ml-auto h-[54px] w-[78px] shrink-0">
            <svg viewBox="0 0 78 54" className="h-full w-full" fill="none" stroke="#fafafa" strokeWidth="4.600" strokeLinejoin="round">
              <rect x="3.500" y="3.500" width="52" height="47.500" rx="8.500" />
              <path d="M55.500 21L70 9.500Q75.500 6.500 75.500 12V41.500Q75.500 46.500 70 43.500L55.500 32" />
            </svg>
          </button>
          <button type="button" aria-label="Anrufen" className="mt-[19px] ml-[73px] h-16 w-16 shrink-0">
            <svg viewBox="0 0 64 64" className="h-full w-full" fill="none" stroke="#fafafa" strokeWidth="4.600" strokeLinejoin="round">
              <path d="M17 5.500C14.500 2 11.500 3 8.500 5C4 8.500 2.500 13 3 21C4 29 8.500 35 14 41C21 49 31 57.500 41 60C48.500 61.500 55 60.500 59 55.500C62 51 62 48.500 58.500 46L48.500 40C45.500 38 43.500 38.500 41.500 40.500L39.500 43C37.500 45 35 44.500 33 42.500L20.500 30C19 28 18.800 26.500 20.500 24.500L23.500 21.500C25.500 19.500 25.800 17.500 24.500 15.500Z" />
            </svg>
          </button>
        </div>
      </header>

      <main className="relative min-h-0 flex-1 overflow-hidden">
        <Wallpaper />
        <div className="relative flex flex-col px-[50px] pt-[35px]">
          <Bubble sent tail className="px-7 pt-4 pb-3">
            <Lines lines={["Ein ambulanter Plegedienst"]} />
            <div className="mt-[13px]">
              <Time value="15:59" sent />
            </div>
          </Bubble>

          <Bubble className="mt-10 w-[857px] px-7 pt-4 pb-3">
            <div className="pb-[13px]">
              <Lines lines={[<>Perfekt. <WritingHand /> Ich habe alle Infos</>, "notiert."]} />
            </div>
            <div className="absolute right-7 bottom-3">
              <Time value="15:59" />
            </div>
          </Bubble>

          <Bubble tail className="mt-3.5 w-[866px] px-7 pt-4 pb-3">
            <div className="pb-[13px]">
              <Lines
                lines={[
                  "Möchtest du, dass ich dir jetzt",
                  "ein vorausgefülltes",
                  "Antragsformular für die",
                  "Pflegekasse erstelle, das du",
                  "nur noch unterschreiben",
                  "musst?",
                ]}
              />
            </div>
            <div className="absolute right-7 bottom-3">
              <Time value="15:59" />
            </div>
          </Bubble>

          <Bubble sent tail className="mt-10 flex items-end gap-12 px-7 pt-4 pb-3">
            <div className="pb-[13px]">
              <Lines lines={["Ja, bitte"]} />
            </div>
            <Time value="15:59" sent />
          </Bubble>

          <Bubble className="mt-10 w-[842px] px-7 pt-4 pb-3">
            <Lines lines={[<><PageIcon /> Hier ist dein Antrag auf</>, "Verhinderungspflege als PDF:"]} />
            <div className="mt-[13px]">
              <Time value="15:59" />
            </div>
          </Bubble>

          <Bubble className="mt-3.5 flex w-[842px] flex-col pb-3">
            <Attachment />
            <div className="mt-[27px] px-7">
              <Lines lines={["Pflegital_Antra-", "g_12.05.2025_Müller.pdf"]} />
              <div className="mt-[13px]">
                <Time value="16:01" />
              </div>
            </div>
          </Bubble>

          <Bubble className="mt-3.5 w-[866px] px-7 pt-4 pb-3">
            <Lines lines={["Du kannst ihn direkt an deine", "Pflegekasse schicken oder ich"]} />
          </Bubble>
        </div>
      </main>

      <footer className="shrink-0 bg-linear-to-br from-[#141414] via-[#111212] to-[#101312]">
        <div className="flex items-center pt-[22px] pr-[50px] pl-[39px]">
          <button type="button" aria-label="Anhang hinzufügen" className="h-16 w-16 shrink-0">
            <svg viewBox="0 0 64 64" className="h-full w-full" stroke="#fafafa" strokeWidth="5.500" strokeLinecap="round">
              <path d="M32 4V60M4 32H60" />
            </svg>
          </button>
          <div className="ml-[38px] flex h-24 min-w-0 flex-1 items-center rounded-full border-2 border-[#3a3a3a] bg-linear-to-r from-[#2b2b2b] to-[#2a2b2b] pr-8 pl-9">
            <input type="text" aria-label="Nachricht" className="min-w-0 flex-1 bg-transparent text-[55px] text-[#fafafa] outline-none" />
            <button type="button" aria-label="Sticker" className="h-14 w-14 shrink-0">
              <svg viewBox="0 0 56 56" className="h-full w-full" fill="none" stroke="#fafafa" strokeWidth="4.200" strokeLinejoin="round">
                <path d="M53.500 24C53.500 8 48 2.500 28 2.500C8 2.500 2.500 8 2.500 28C2.500 48 8 53.500 27 53.500C34 53.500 36 51 39 48.500L49 38.500C53 34 53.500 31 53.500 24Z" />
                <path d="M53 30L45 31C36 32 32 36 31.500 43L31 52" />
              </svg>
            </button>
          </div>
          <button type="button" aria-label="Kamera" className="ml-[55px] h-14 w-[72px] shrink-0">
            <svg viewBox="0 0 72 56" className="h-full w-full" fill="none" stroke="#fafafa" strokeWidth="4.800" strokeLinejoin="round">
              <path d="M8 9.500H19Q21.500 9.500 23 8L26.500 4Q28 2.500 30.500 2.500H41.500Q44 2.500 45.500 4L49 8Q50.500 9.500 53 9.500H63Q68.500 9.500 68.500 14.500V47.500Q68.500 52.500 63 52.500H8Q2.500 52.500 2.500 47.500V14.500Q2.500 9.500 8 9.500Z" />
              <circle cx="35.500" cy="31" r="13.500" />
              <circle cx="56" cy="20.500" r="3.800" fill="#fafafa" stroke="none" />
            </svg>
          </button>
          <button type="button" aria-label="Sprachnachricht" className="ml-[55px] h-[72px] w-[50px] shrink-0">
            <svg viewBox="0 2 50 72" className="h-full w-full" fill="none" stroke="#fafafa" strokeWidth="4.800" strokeLinecap="round">
              <rect x="14.250" y="4.500" width="21.500" height="44" rx="10.750" />
              <path d="M3.500 37A21.500 21.500 0 0 0 46.500 37M25 58.500V69" />
            </svg>
          </button>
        </div>
        <div className="flex justify-center pt-[84px] pb-6">
          <span className="h-[15px] w-[420px] rounded-full bg-white" />
        </div>
      </footer>
    </div>
  );
}
